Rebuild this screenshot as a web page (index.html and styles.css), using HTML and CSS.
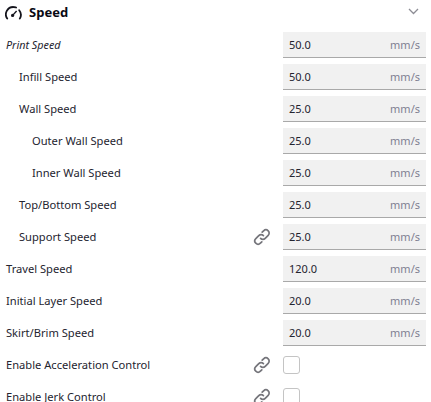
FILE: index.html
```html
<!DOCTYPE html>
<html lang="en">
<head>
<meta charset="utf-8">
<title>Speed</title>
<link rel="stylesheet" href="styles.css">
</head>
<body>
<svg class="defs" width="0" height="0" aria-hidden="true">
  <symbol id="link" viewBox="0 0 18 18">
    <path d="M7.6 10.4a3.2 3.2 0 0 0 4.6 0l3-3a3.2 3.2 0 0 0-4.6-4.6L9.2 4.2" fill="none" stroke="currentColor" stroke-width="1.7" stroke-linecap="round"/>
    <path d="M10.4 7.6a3.2 3.2 0 0 0-4.6 0l-3 3a3.2 3.2 0 0 0 4.6 4.6l1.4-1.4" fill="none" stroke="currentColor" stroke-width="1.7" stroke-linecap="round"/>
  </symbol>
</svg>
<main class="panel">
  <header class="head">
    <svg class="gauge" width="17" height="14" viewBox="0 0 17 14" aria-hidden="true">
      <path d="M2.2 12.6A7.4 7.4 0 0 1 8.5 1a7 7 0 0 1 2.6.5M14.2 4.2a7.4 7.4 0 0 1 .6 8.4" fill="none" stroke="#14141c" stroke-width="1.8" stroke-linecap="round"/>
      <path d="M7.6 9.4 11.6 5" fill="none" stroke="#14141c" stroke-width="1.4"/>
      <circle cx="7.6" cy="9.4" r="1.6" fill="#14141c"/>
    </svg>
    <h1 class="title">Speed</h1>
    <svg class="chev" width="11" height="7" viewBox="0 0 11 7" aria-hidden="true">
      <path d="M1 1l4.5 4.5L10 1" fill="none" stroke="#8d8d95" stroke-width="1.3"/>
    </svg>
  </header>
  <div class="row"><span class="label italic">Print Speed</span><div class="field"><span>50.0</span><span class="unit">mm/s</span></div></div>
  <div class="row"><span class="label l1">Infill Speed</span><div class="field"><span>50.0</span><span class="unit">mm/s</span></div></div>
  <div class="row"><span class="label l1">Wall Speed</span><div class="field"><span>25.0</span><span class="unit">mm/s</span></div></div>
  <div class="row"><span class="label l2">Outer Wall Speed</span><div class="field"><span>25.0</span><span class="unit">mm/s</span></div></div>
  <div class="row"><span class="label l2">Inner Wall Speed</span><div class="field"><span>25.0</span><span class="unit">mm/s</span></div></div>
  <div class="row"><span class="label l1">Top/Bottom Speed</span><div class="field"><span>25.0</span><span class="unit">mm/s</span></div></div>
  <div class="row"><span class="label l1">Support Speed</span><svg class="link"><use href="#link"/></svg><div class="field"><span>25.0</span><span class="unit">mm/s</span></div></div>
  <div class="row"><span class="label">Travel Speed</span><div class="field"><span>120.0</span><span class="unit">mm/s</span></div></div>
  <div class="row"><span class="label">Initial Layer Speed</span><div class="field"><span>20.0</span><span class="unit">mm/s</span></div></div>
  <div class="row"><span class="label">Skirt/Brim Speed</span><div class="field"><span>20.0</span><span class="unit">mm/s</span></div></div>
  <div class="row"><span class="label">Enable Acceleration Control</span><svg class="link"><use href="#link"/></svg><div class="check"></div></div>
  <div class="row"><span class="label">Enable Jerk Control</span><svg class="link"><use href="#link"/></svg><div class="check"></div></div>
</main>
</body>
</html>
```

FILE: styles.css
```css
html, body {
  margin: 0;
  height: 100%;
  overflow: hidden;
  background: #fff;
}

.defs {
  display: block;
  height: 0;
}

.panel {
  display: flex;
  flex-direction: column;
  gap: 6px;
  width: 431px;
  font-family: "Noto Sans", sans-serif;
  font-size: 11px;
  color: #24242f;
}

.head {
  display: flex;
  align-items: center;
  height: 26px;
  padding: 0 12px 0 5px;
}

.gauge {
  flex: none;
  margin-right: 7px;
}

.title {
  flex: 1;
  margin: 0 0 2px;
  font-size: 13px;
  font-weight: 700;
  color: #0a0a14;
}

.chev {
  flex: none;
  margin-top: -3px;
}

.row {
  display: flex;
  align-items: center;
  height: 26px;
  padding: 0 5px 0 6px;
}

.label {
  flex: 1;
  padding-bottom: 2px;
  font-size: 11.15px;
  white-space: nowrap;
}

.italic {
  font-size: 10.8px;
  font-style: italic;
}

.l1 {
  padding-left: 13px;
}

.l2 {
  padding-left: 26px;
}

.link {
  flex: none;
  width: 18px;
  height: 18px;
  margin-right: 12px;
  color: #75757b;
}

.field {
  flex: none;
  display: flex;
  justify-content: space-between;
  align-items: center;
  box-sizing: border-box;
  width: 143px;
  height: 26px;
  padding: 0 6px;
  background: #f1f1f1;
  border-bottom: 1px solid #a9a9a9;
}

.unit {
  color: #7f7f92;
}

.check {
  flex: none;
  box-sizing: border-box;
  width: 17px;
  height: 18px;
  margin-right: 126px;
  border: 1px solid #c4c4c4;
  border-radius: 3px;
  background: #fff;
}
```
